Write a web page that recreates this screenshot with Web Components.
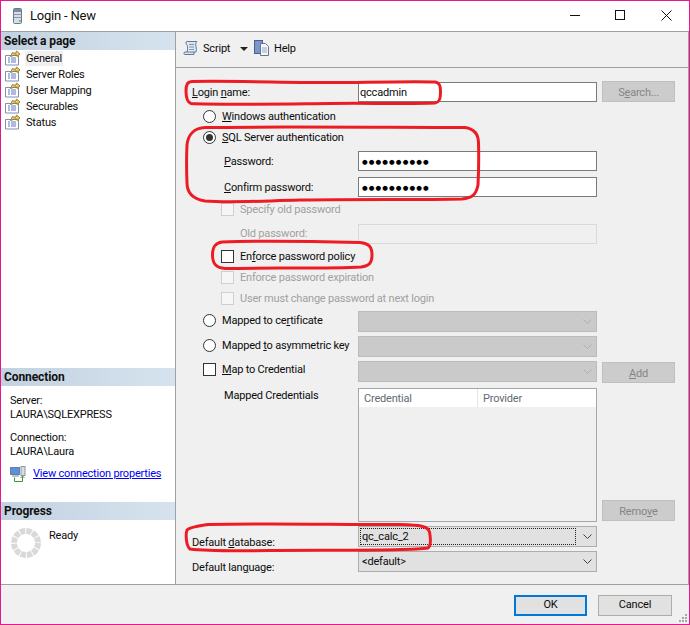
<!DOCTYPE html>
<html lang="en">
<head>
<meta charset="utf-8">
<title>Login - New</title>
<style>
  body { margin: 0; background: #f0f0f0; }
</style>
</head>
<body>
<login-dialog>
  <win-titlebar slot="title">Login - New</win-titlebar>

  <side-panel slot="side">
    <panel-heading>Select a page</panel-heading>
    <div style="flex:1">
      <nav-item selected>General</nav-item>
      <nav-item>Server Roles</nav-item>
      <nav-item>User Mapping</nav-item>
      <nav-item>Securables</nav-item>
      <nav-item>Status</nav-item>
    </div>
    <panel-heading>Connection</panel-heading>
    <connection-info></connection-info>
    <panel-heading>Progress</panel-heading>
    <progress-info>Ready</progress-info>
  </side-panel>

  <script-toolbar slot="toolbar"></script-toolbar>

  <form-row slot="form" style="margin-top:14px;height:20px">
    <span><u>L</u>ogin <u>n</u>ame:</span>
    <win-input slot="field">qccadmin</win-input>
    <win-button slot="action" disabled style="margin-top:-1px;height:21px">S<u>e</u>arch...</win-button>
  </form-row>
  <form-row slot="form" indent="11" style="margin-top:4px;height:20px">
    <win-choice type="radio"><u>W</u>indows authentication</win-choice>
  </form-row>
  <form-row slot="form" indent="11" style="margin-top:1px;height:20px">
    <win-choice type="radio" checked><u>S</u>QL Server authentication</win-choice>
  </form-row>
  <form-row slot="form" indent="32" style="margin-top:4px;height:20px">
    <span><u>P</u>assword:</span>
    <win-input slot="field" secret>●●●●●●●●●●</win-input>
  </form-row>
  <form-row slot="form" indent="32" style="margin-top:6px;height:20px">
    <span><u>C</u>onfirm password:</span>
    <win-input slot="field" secret>●●●●●●●●●●</win-input>
  </form-row>
  <form-row slot="form" indent="29" style="margin-top:2px;height:20px">
    <win-choice type="check" disabled>Specify old password</win-choice>
  </form-row>
  <form-row slot="form" indent="48" style="margin-top:5px;height:20px">
    <span style="color:#a0a0a0;margin-bottom:2px">Old password:</span>
    <win-input slot="field" disabled></win-input>
  </form-row>
  <form-row slot="form" indent="29" style="margin-top:2px;height:20px">
    <win-choice type="check">En<u>f</u>orce password policy</win-choice>
  </form-row>
  <form-row slot="form" indent="29" style="margin-top:1px;height:20px">
    <win-choice type="check" disabled>Enforce password expiration</win-choice>
  </form-row>
  <form-row slot="form" indent="29" style="margin-top:1px;height:20px">
    <win-choice type="check" disabled>User must change password at next login</win-choice>
  </form-row>
  <form-row slot="form" indent="11" style="margin-top:3px;height:21px">
    <win-choice type="radio" style="margin-bottom:3px">Mapped to ce<u>r</u>tificate</win-choice>
    <win-select slot="field" disabled></win-select>
  </form-row>
  <form-row slot="form" indent="11" style="margin-top:4px;height:21px">
    <win-choice type="radio" style="margin-bottom:3px">Mapped <u>t</u>o asymmetric key</win-choice>
    <win-select slot="field" disabled></win-select>
  </form-row>
  <form-row slot="form" indent="11" style="margin-top:4px;height:21px">
    <win-choice type="check" style="margin-bottom:6px"><u>M</u>ap to Credential</win-choice>
    <win-select slot="field" disabled></win-select>
    <win-button slot="action" disabled style="margin-top:1px;height:21px"><u>A</u>dd</win-button>
  </form-row>
  <form-row slot="form" indent="32" top style="margin-top:6px;height:134px">
    <span>Mapped Credentials</span>
    <credential-table slot="field"></credential-table>
    <win-button slot="action" disabled style="margin-top:112px;height:21px">Remo<u>v</u>e</win-button>
  </form-row>
  <form-row slot="form" style="margin-top:4px;height:21px">
    <span style="margin-top:8px">Default <u>d</u>atabase:</span>
    <win-select slot="field" focused>qc_calc_2</win-select>
  </form-row>
  <form-row slot="form" style="margin-top:4px;height:21px">
    <span style="margin-top:8px">Default lan<u>g</u>uage:</span>
    <win-select slot="field">&lt;default&gt;</win-select>
  </form-row>

  <win-button slot="footer" style="width:73px;height:21px;padding-bottom:1px" primary>OK</win-button>
  <win-button slot="footer" style="width:74px;height:21px;padding-bottom:1px">Cancel</win-button>
</login-dialog>
<red-marks></red-marks>

<script>
class LoginDialog extends HTMLElement {
    connectedCallback() {
        this.attachShadow({ mode: 'open' });
        this.shadowRoot.innerHTML = `
            <style>
                :host {
                    display: flex;
                    flex-direction: column;
                    box-sizing: border-box;
                    width: 690px;
                    height: 625px;
                    position: relative;
                    overflow: hidden;
                    border: 1px solid #e6178e;
                    background: #f0f0f0;
                    color: #0c0c0c;
                    font: 11px/14px Roboto, "Liberation Sans", sans-serif;
                    letter-spacing: -.2px;
                }
                .main { display: flex; height: 552px; border-bottom: 1px solid #a0a0a0; box-sizing: content-box; }
                .right { flex: 1; display: flex; flex-direction: column; border-right: 1px solid #a0a0a0; }
                .form { display: flex; flex-direction: column; padding-left: 16px; }
                .footer { flex: 1; display: flex; justify-content: flex-end; gap: 11px; padding: 10px 17px 0 0; }
                .grip { position: absolute; right: 1px; bottom: 1px; }
            </style>
            <slot name="title"></slot>
            <div class="main">
                <slot name="side"></slot>
                <div class="right">
                    <slot name="toolbar"></slot>
                    <div class="form"><slot name="form"></slot></div>
                </div>
            </div>
            <div class="footer"><slot name="footer"></slot></div>
            <svg class="grip" width="9" height="9" viewBox="0 0 9 9" fill="#a8a8a8">
                <rect x="6" y="0" width="2" height="2"/><rect x="3" y="3" width="2" height="2"/><rect x="6" y="3" width="2" height="2"/>
                <rect x="0" y="6" width="2" height="2"/><rect x="3" y="6" width="2" height="2"/><rect x="6" y="6" width="2" height="2"/>
            </svg>
        `;
    }
}
customElements.define('login-dialog', LoginDialog);

class WinTitlebar extends HTMLElement {
    connectedCallback() {
        this.attachShadow({ mode: 'open' });
        this.shadowRoot.innerHTML = `
            <style>
                :host {
                    display: flex;
                    align-items: center;
                    height: 30px;
                    flex: none;
                    background: #fff;
                    border-bottom: 1px solid #a0a0a0;
                    font-size: 13px;
                    color: #111;
                }
                .icon { margin-left: 11px; margin-right: 7px; }
                .text { flex: 1; }
                .btns { display: flex; align-items: center; }
                .btns svg { display: block; }
            </style>
            <svg class="icon" width="11" height="16" viewBox="0 0 11 16">
                <rect x="1.5" y="0.5" width="8" height="15" rx="1" fill="#d5dde6" stroke="#6d7a8a"/>
                <rect x="2" y="1" width="7" height="3" fill="#7d8b9c"/>
                <rect x="2" y="6" width="7" height="1" fill="#8b98a8"/>
                <rect x="2" y="9" width="7" height="1" fill="#8b98a8"/>
                <rect x="7" y="12" width="2" height="2" fill="#7cc26a"/>
            </svg>
            <span class="text"><slot></slot></span>
            <div class="btns">
                <svg width="46" height="30" viewBox="0 0 46 30"><rect x="19" y="14" width="10" height="1" fill="#111"/></svg>
                <svg width="46" height="30" viewBox="0 0 46 30"><rect x="18.5" y="9.5" width="9" height="9" fill="none" stroke="#111"/></svg>
                <svg width="46" height="30" viewBox="0 0 46 30"><path d="M18.5 9.5l10 10M28.5 9.5l-10 10" stroke="#111" fill="none"/></svg>
            </div>
        `;
    }
}
customElements.define('win-titlebar', WinTitlebar);

class SidePanel extends HTMLElement {
    connectedCallback() {
        this.attachShadow({ mode: 'open' });
        this.shadowRoot.innerHTML = `
            <style>
                :host {
                    display: flex;
                    flex-direction: column;
                    flex: none;
                    width: 174px;
                    background: #fff;
                    border-right: 1px solid #a0a0a0;
                }
            </style>
            <slot></slot>
        `;
    }
}
customElements.define('side-panel', SidePanel);

class PanelHeading extends HTMLElement {
    connectedCallback() {
        this.attachShadow({ mode: 'open' });
        this.shadowRoot.innerHTML = `
            <style>
                :host {
                    display: flex;
                    align-items: center;
                    flex: none;
                    height: 18px;
                    padding-left: 3px;
                    background: linear-gradient(to right, #c3d2e0, #d6e3ef);
                    font-weight: 700;
                    font-size: 12px;
                    letter-spacing: -.1px;
                    color: #111;
                }
            </style>
            <slot></slot>
        `;
    }
}
customElements.define('panel-heading', PanelHeading);

class NavItem extends HTMLElement {
    connectedCallback() {
        this.attachShadow({ mode: 'open' });
        this.shadowRoot.innerHTML = `
            <style>
                :host { display: flex; align-items: center; height: 16px; padding-left: 4px; }
                svg { flex: none; margin-right: 4px; }
                span { padding: 0 1px; line-height: 15px; }
                :host([selected]) span { background: #f0f0f0; }
            </style>
            <svg width="16" height="16" viewBox="0 0 16 16">
                <path d="M.5 5.500h13v9.500H.5z" fill="#fff" stroke="#7f8db0"/>
                <path d="M3 8h2M3 10h2M3 12h2M6 8h5M6 10h5M6 12h5" stroke="#5d74c6"/>
                <path d="M5.500 6.500l2-4 3 1 1-2.500 3.500 3-3 2.500-.5-1.500-3 .5z" fill="#f3c94b" stroke="#7a6a35" stroke-width=".8"/>
            </svg>
            <span><slot></slot></span>
        `;
    }
}
customElements.define('nav-item', NavItem);

class ConnectionInfo extends HTMLElement {
    connectedCallback() {
        this.attachShadow({ mode: 'open' });
        this.shadowRoot.innerHTML = `
            <style>
                :host { display: block; flex: none; height: 116px; padding-left: 9px; box-sizing: border-box; padding-top: 8px; }
                p { margin: 0 0 9px; }
                .link { display: flex; align-items: center; gap: 7px; margin-top: -2px; white-space: nowrap; }
                a { color: #0000ee; text-decoration: underline; }
            </style>
            <p>Server:<br>LAURA\\SQLEXPRESS</p>
            <p>Connection:<br>LAURA\\Laura</p>
            <div class="link">
                <svg width="16" height="16" viewBox="0 0 16 16">
                    <rect x="0.5" y="1.5" width="9" height="7" fill="#5a8fdc" stroke="#6f7f99"/>
                    <rect x="2" y="9" width="7" height="2" fill="#b8c2d0"/>
                    <rect x="11" y="0.5" width="4" height="9" fill="#d8dce4" stroke="#8e97a6"/>
                    <path d="M4.5 11.5v4h8v-5M10.5 12l2-2 2 2" fill="none" stroke="#3a9a3a"/>
                </svg>
                <a href="#">View connection properties</a>
            </div>
        `;
    }
}
customElements.define('connection-info', ConnectionInfo);

class ProgressInfo extends HTMLElement {
    connectedCallback() {
        this.attachShadow({ mode: 'open' });
        this.shadowRoot.innerHTML = `
            <style>
                :host { display: flex; flex: none; height: 56px; gap: 8px; padding: 8px 0 0 10px; align-items: flex-start; }
                svg { flex: none; }
                span { padding-top: 1px; }
            </style>
            <svg width="30" height="30" viewBox="0 0 30 30">
                <circle cx="15" cy="15" r="12" fill="none" stroke="#d9d9d9" stroke-width="6" stroke-dasharray="5.28 1"/>
            </svg>
            <span><slot></slot></span>
        `;
    }
}
customElements.define('progress-info', ProgressInfo);

class ScriptToolbar extends HTMLElement {
    connectedCallback() {
        this.attachShadow({ mode: 'open' });
        this.shadowRoot.innerHTML = `
            <style>
                :host {
                    display: flex;
                    align-items: center;
                    flex: none;
                    height: 32px;
                    padding: 0 0 3px 7px;
                    border-bottom: 1px solid #a0a0a0;
                }
                svg { flex: none; }
                span { padding-top: 2px; }
            </style>
            <svg width="16" height="16" viewBox="0 0 16 16" style="margin-right:4px">
                <path d="M4 1.5h10c-1.500 1-1.500 3-1 5s.5 4 0 5.500h-2v2.500H2c-1.500 0-1.500-2.500 0-2.500h9M4 1.500C2.500 1.500 2.500 4 4 4.500c.8 2 1 5 0 7.500" fill="#dbe5ef" stroke="#5d7b9b"/>
                <path d="M6 4.500h5M6 7h5M6 9.500h5" stroke="#7c94ad"/>
            </svg>
            <span style="width:37px">Script</span>
            <svg width="8" height="4" viewBox="0 0 8 4" style="margin:1px 6px 0 0"><path d="M0 0h8L4 4z" fill="#222"/></svg>
            <svg width="16" height="16" viewBox="0 0 16 16" style="margin-right:4px">
                <rect x="0.500" y="0.500" width="8" height="13" fill="#7d94c6" stroke="#4a5f92"/>
                <path d="M6.500 3.500h5l3 3v9h-8z" fill="#f4f6fa" stroke="#66758f"/>
                <path d="M8 8h5M8 10h5M8 12h5" stroke="#9aa8c0"/>
            </svg>
            <span>Help</span>
        `;
    }
}
customElements.define('script-toolbar', ScriptToolbar);

class FormRow extends HTMLElement {
    connectedCallback() {
        const indent = this.getAttribute('indent') || 0;
        this.attachShadow({ mode: 'open' });
        this.shadowRoot.innerHTML = `
            <style>
                :host {
                    display: grid;
                    grid-template-columns: 166px 239px 78px;
                    flex: none;
                    white-space: nowrap;
                }
                .label { display: flex; align-items: center; padding-left: ${indent}px; }
                ::slotted(span) { padding-top: 2px; }
                :host([top]) .label { align-items: flex-start; }
                :host([top]) ::slotted(span) { padding-top: 1px; }
                .field { display: flex; }
                .action { margin-left: 5px; display: flex; align-items: flex-start; }
            </style>
            <div class="label"><slot></slot></div>
            <div class="field"><slot name="field"></slot></div>
            <div class="action"><slot name="action"></slot></div>
        `;
    }
}
customElements.define('form-row', FormRow);

class WinChoice extends HTMLElement {
    connectedCallback() {
        const radio = this.getAttribute('type') === 'radio';
        this.attachShadow({ mode: 'open' });
        this.shadowRoot.innerHTML = `
            <style>
                :host { display: inline-flex; align-items: center; gap: 6px; }
                :host([disabled]) { color: #a0a0a0; }
                svg { flex: none; display: block; }
                span { padding-top: 2px; }
            </style>
            <svg width="13" height="13" viewBox="0 0 13 13">
                ${radio
                    ? `<circle cx="6.500" cy="6.500" r="6" fill="#fff" stroke="#333"/>` +
                      (this.hasAttribute('checked') ? `<circle cx="6.500" cy="6.500" r="3.500" fill="#333"/>` : '')
                    : this.hasAttribute('disabled')
                        ? `<rect x=".5" y=".5" width="12" height="12" fill="#f6f6f6" stroke="#cfcfcf"/>`
                        : `<rect x=".5" y=".5" width="12" height="12" fill="#fff" stroke="#333"/>`}
            </svg>
            <span><slot></slot></span>
        `;
    }
}
customElements.define('win-choice', WinChoice);

class WinInput extends HTMLElement {
    connectedCallback() {
        this.attachShadow({ mode: 'open' });
        this.shadowRoot.innerHTML = `
            <style>
                :host {
                    display: flex;
                    align-items: center;
                    box-sizing: border-box;
                    width: 239px;
                    height: 20px;
                    padding: 2px 0 0 1px;
                    background: #fff;
                    border: 1px solid #7a7a7a;
                }
                :host([disabled]) { background: #f0f0f0; border-color: #d9d9d9; }
                :host([secret]) { font: 6.5px/14px "DejaVu Sans", sans-serif; letter-spacing: 1.1px; padding: 1px 0 0 3px; color: #000; }
            </style>
            <slot></slot>
        `;
    }
}
customElements.define('win-input', WinInput);

class WinSelect extends HTMLElement {
    connectedCallback() {
        this.attachShadow({ mode: 'open' });
        this.shadowRoot.innerHTML = `
            <style>
                :host {
                    display: flex;
                    align-items: center;
                    box-sizing: border-box;
                    width: 239px;
                    height: 21px;
                    background: #e1e1e1;
                    border: 1px solid #adadad;
                }
                :host([disabled]) { background: #cacaca; border-color: #bcbcbc; }
                .value { flex: 1; align-self: stretch; display: flex; align-items: center; padding: 1px 0 0 2px; margin: 1px 0 1px 1px; }
                :host([focused]) .value { outline: 1px dotted #222; outline-offset: -1px; }
                svg { flex: none; margin: 0 4px 0 7px; }
                :host([disabled]) path { stroke: #b0b0b0; }
            </style>
            <span class="value"><slot></slot></span>
            <svg width="9" height="5" viewBox="0 0 9 5"><path d="M.5 .5l4 4 4-4" fill="none" stroke="#444"/></svg>
        `;
    }
}
customElements.define('win-select', WinSelect);

class WinButton extends HTMLElement {
    connectedCallback() {
        this.attachShadow({ mode: 'open' });
        this.shadowRoot.innerHTML = `
            <style>
                :host {
                    display: flex;
                    align-items: center;
                    justify-content: center;
                    box-sizing: border-box;
                    width: 73px;
                    background: #e1e1e1;
                    border: 1px solid #adadad;
                }
                :host([disabled]) { background: #cccccc; border-color: #bfbfbf; color: #858585; padding-top: 2px; }
                :host([primary]) { border: 2px solid #0078d7; }
            </style>
            <slot></slot>
        `;
    }
}
customElements.define('win-button', WinButton);

class CredentialTable extends HTMLElement {
    connectedCallback() {
        this.attachShadow({ mode: 'open' });
        this.shadowRoot.innerHTML = `
            <style>
                :host { display: block; box-sizing: border-box; width: 239px; height: 134px; border: 1px solid #a5a5ad; }
                .head { display: grid; grid-template-columns: 119px 1fr; height: 18px; background: #fff; color: #5f6b76; }
                .head span { display: flex; align-items: center; padding: 1px 0 0 5px; }
                .head span:first-child { border-right: 1px solid #e5e5e5; }
            </style>
            <div class="head"><span>Credential</span><span>Provider</span></div>
        `;
    }
}
customElements.define('credential-table', CredentialTable);

class RedMarks extends HTMLElement {
    connectedCallback() {
        this.attachShadow({ mode: 'open' });
        this.shadowRoot.innerHTML = `
            <style>
                :host { position: absolute; left: 0; top: 0; width: 690px; height: 625px; pointer-events: none; }
                svg { display: block; }
                path { fill: none; stroke: #ed1c24; stroke-width: 3; stroke-linejoin: round; }
            </style>
            <svg width="690" height="625" viewBox="0 0 690 625">
                <path d="M192 81.500C230 80.500 300 83 350 82.500C380 82 420 81 435 82C440 83 440.500 86 440.500 93C440.500 100 439 102.500 435 103C410 104 360 103 330 103.500C280 104 220 105 191 103.500C186.500 102 186 97 186 91C186 85 187 82 192 81.500z"/>
                <path d="M205 127.500C260 126.500 400 127.500 465 127.500C475 129 478.500 135 478.500 143C479 160 478.500 175 478 185C476 195 472 198 462 199C420 200 360 199 300 200C260 201 230 203 205 201C193 199 187 193 187 183C186.500 170 186.500 155 187 145C188 134 195 128 205 127.500z"/>
                <path d="M222 242C260 240.500 320 241.500 360 242.500C370 243.500 372 248 372 255C372 262 370 266 361 267C330 269 270 267.500 225 268.500C215 268 212.500 263 212.500 255C212.500 247 215 243 222 242z"/>
                <path d="M208 524.500C260 523 330 524.500 400 524.500C420 525 428 526 429.500 532C431 540 430.500 546 428 548C410 551 330 550 270 550.500C235 551 205 551 190 549C186 546 185.500 534 187 530C190 527 198 526 208 524.500z"/>
            </svg>
        `;
    }
}
customElements.define('red-marks', RedMarks);
</script>
</body>
</html>
